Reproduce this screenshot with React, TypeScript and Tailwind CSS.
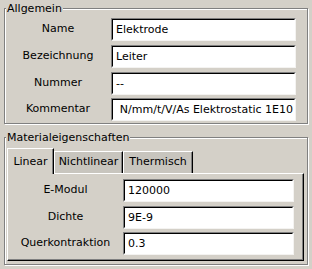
import React from "react";

const FONT = { fontFamily: '"DejaVu Sans", Verdana, sans-serif' };

function Field({ value, w, alignEnd }: { value: string; w: string; alignEnd?: boolean }) {
  return (
    <div className={`h-[23px] ${w} border border-t-[#808080] border-l-[#808080] border-r-[#f4f3f1] border-b-[#f4f3f1]`}>
      <div
        className={`h-full w-full bg-white border border-t-[#000] border-l-[#000] border-r-[#fff] border-b-[#fff] flex items-center overflow-hidden whitespace-nowrap ${
          alignEnd ? "justify-end pr-[1px]" : "pl-[3px]"
        }`}
      >
        <span className="text-black leading-none">{value}</span>
      </div>
    </div>
  );
}

function Row({ label, value, labelW, fieldW, mt, alignEnd }: { label: string; value: string; labelW: string; fieldW: string; mt: string; alignEnd?: boolean }) {
  return (
    <div className={`flex items-center ${mt}`}>
      <div className={`${labelW} text-center text-black`}>{label}</div>
      <Field value={value} w={fieldW} alignEnd={alignEnd} />
    </div>
  );
}

function Group({ title, className, children }: { title: string; className: string; children: React.ReactNode }) {
  return (
    <div className={`relative border border-[#808080] shadow-[inset_1px_1px_0_#fff,1px_1px_0_#fff] ${className}`}>
      <span className="absolute left-[1px] top-[-7px] bg-[#d4d0c8] pl-[1px] pr-[1px] leading-[13px] text-black">{title}</span>
      {children}
    </div>
  );
}

export default function App() {
  return (
    <div className="w-[312px] h-[269px] bg-[#d4d0c8] pt-[8px] pl-[4px] text-[11px] overflow-hidden" style={FONT}>
      <Group title="Allgemein" className="w-[304px] h-[116px] pt-[9px]">
        <Row label="Name" value="Elektrode" labelW="w-[106px]" fieldW="w-[185px]" mt="" />
        <Row label="Bezeichnung" value="Leiter" labelW="w-[106px]" fieldW="w-[185px]" mt="mt-[4px]" />
        <Row label="Nummer" value="--" labelW="w-[106px]" fieldW="w-[185px]" mt="mt-[4px]" />
        <Row label="Kommentar" value="N/mm/t/V/As Elektrostatic 1E10" labelW="w-[106px]" fieldW="w-[185px]" mt="mt-[3px]" alignEnd />
      </Group>
      <Group title="Materialeigenschaften" className="mt-[13px] w-[304px] h-[128px] pt-[10px] pl-[2px] pr-[3px]">
        <div className="flex items-end h-[25px]">
          <div className="relative z-10 h-[26px] -mb-[1px] w-[47px] bg-[#d4d0c8] border-t border-l border-t-white border-l-white border-r border-r-black shadow-[inset_-1px_0_0_#808080] flex items-center justify-center pt-[2px] text-black">
            Linear
          </div>
          <div className="h-[22px] w-[69px] bg-[#c8c5be] border-t border-l border-t-white border-l-white border-r border-r-black shadow-[inset_-1px_0_0_#808080] flex items-center justify-center text-black">
            Nichtlinear
          </div>
          <div className="h-[22px] w-[70px] bg-[#c8c5be] border-t border-l border-t-white border-l-white border-r border-r-black shadow-[inset_-1px_0_0_#808080] flex items-center justify-center text-black">
            Thermisch
          </div>
        </div>
        <div className="h-[88px] w-[297px] border border-t-white border-l-white border-r-black border-b-black shadow-[inset_-1px_-1px_0_#808080] pt-[5px]">
          <Row label="E-Modul" value="120000" labelW="w-[115px]" fieldW="w-[171px]" mt="" />
          <Row label="Dichte" value="9E-9" labelW="w-[115px]" fieldW="w-[171px]" mt="mt-[4px]" />
          <Row label="Querkontraktion" value="0.3" labelW="w-[115px]" fieldW="w-[171px]" mt="mt-[3px]" />
        </div>
      </Group>
    </div>
  );
}
